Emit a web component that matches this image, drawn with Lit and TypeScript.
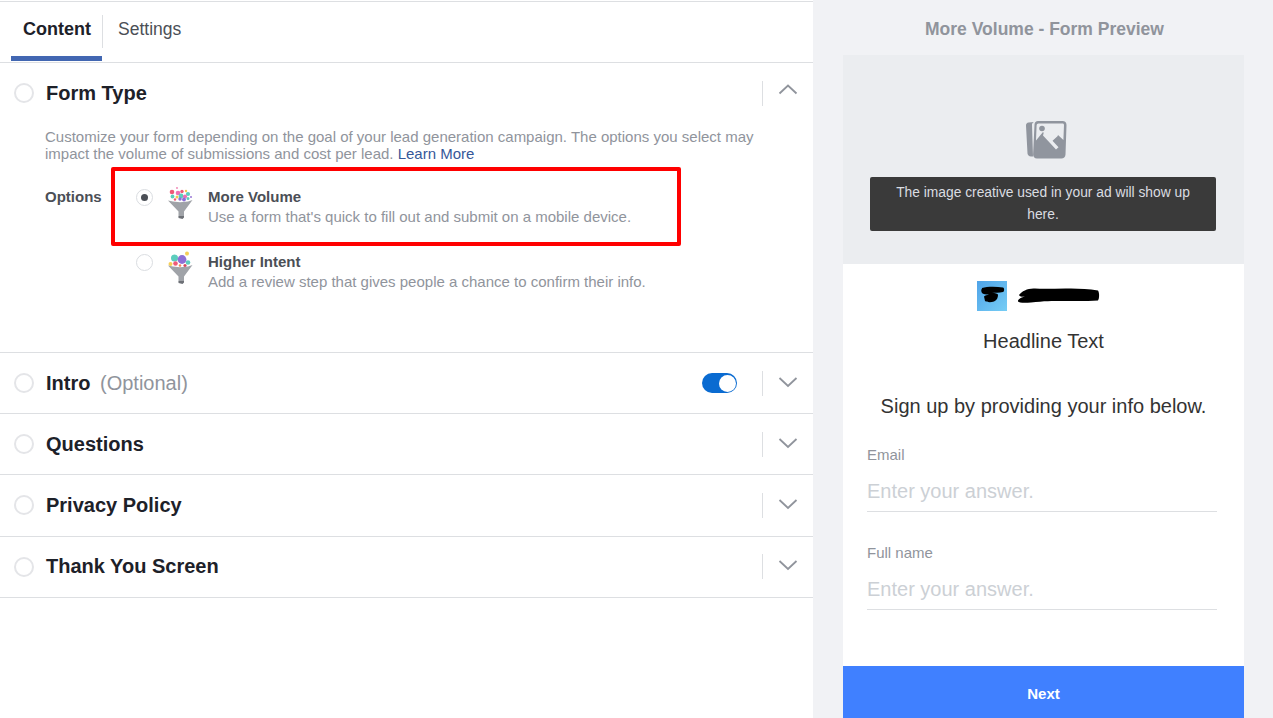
import { LitElement, html, css, svg } from 'lit';
import { customElement } from 'lit/decorators.js';

const chevronUp = html`<svg class="chev up" width="20" height="12" viewBox="0 0 20 12"><path d="M1.500 10.500 10 2.500l8.500 8" fill="none" stroke="#90949c" stroke-width="1.800"/></svg>`;
const chevronDown = html`<svg class="chev" width="20" height="12" viewBox="0 0 20 12"><path d="M1.500 2 10 10l8.500-8" fill="none" stroke="#90949c" stroke-width="1.800"/></svg>`;

// [cx, cy, r, fill] dots spilling out of the funnel
const manyDots: [number, number, number, string][] = [
  [5, 6, 2.300, '#ef5a78'], [10, 2, 0.900, '#ef7fb0'], [11, 7, 2.300, '#ee6fb5'], [15, 5.500, 1.700, '#ef5a78'],
  [19, 5, 1.200, '#f4c84e'], [21, 8, 2.100, '#5ccdbd'], [5.500, 10.500, 1.900, '#5ccdbd'], [10, 11, 1.500, '#f4c84e'],
  [14, 10, 2.400, '#5ccdbd'], [18, 10.500, 2.100, '#ee6fb5'], [24, 11, 1, '#9a78d6'], [13, 13, 1.700, '#8a6fd6'],
  [17, 13.500, 1.900, '#8a6fd6'], [21, 12.500, 1.500, '#5ccdbd'], [8, 13.500, 1.200, '#ef5a78'],
];
const fewDots: [number, number, number, string][] = [
  [7.500, 7, 3.500, '#5ccdbd'], [20, 2.500, 2, '#f6cf57'], [15, 8.500, 4.400, '#8e6fd6'], [3.500, 13, 2, '#f6cf57'],
  [8.500, 12.500, 2.300, '#ef5a78'], [21, 11.500, 2.300, '#5ccdbd'], [13, 14.500, 1.300, '#ef8a5a'], [18, 14.500, 1.600, '#d8455f'],
];

const funnel = (dots: [number, number, number, string][]) => html`<svg width="27" height="35" viewBox="0 0 27 35">
  ${dots.map(([cx, cy, r, fill]) => svg`<circle cx=${cx} cy=${cy} r=${r} fill=${fill}/>`)}
  <path d="M1 14.500 6 15.500l7 .8 8-.8 4.500-1.500-8.500 11.500V30.500H11.500v-5z" fill="#a0a3a8"/>
  <path d="M11.500 30h5.500v1.500l-1.500 1.500-4-1z" fill="#6d7076"/>
</svg>`;

@customElement('app-root')
export class AppRoot extends LitElement {
  static styles = css`
    :host {
      display: block;
      font-family: 'Liberation Sans', Arial, sans-serif;
      color: #1d2129;
    }

    .page {
      display: grid;
      grid-template-columns: 813px 1fr;
      height: 718px;
      overflow: hidden;
      background: #fff;
    }

    .main {
      position: relative;
      border-top: 1px solid #dddfe2;
      margin-top: 1px;
    }

    .tabs {
      display: flex;
      height: 60px;
      padding-left: 11px;
      border-bottom: 1px solid #dddfe2;
    }

    .tab {
      display: flex;
      align-items: center;
      height: 54px;
      font-size: 17.500px;
    }

    .tab.active {
      position: relative;
      width: 91px;
      height: 59px;
      padding-left: 12px;
      box-sizing: border-box;
      font-size: 18px;
      font-weight: bold;
      border-bottom: 5px solid #4267b2;
    }

    .tab.active::after {
      content: '';
      position: absolute;
      right: -1px;
      top: 13px;
      height: 33px;
      width: 1px;
      background: #dddfe2;
    }

    .tab.plain {
      padding-left: 16px;
      color: #4b4f56;
    }

    .section {
      border-bottom: 1px solid #dddfe2;
    }

    .head {
      display: flex;
      align-items: center;
      height: 60px;
      padding: 0 15px 0 13.500px;
    }

    .row .head {
      height: 60.200px;
    }

    .radio {
      width: 20px;
      height: 20px;
      border: 2px solid #e4e5e8;
      border-radius: 50%;
      box-sizing: border-box;
      margin-right: 12.500px;
      flex: none;
    }

    .title {
      font-size: 20px;
      font-weight: bold;
      flex: 1;
    }

    .title span {
      font-weight: normal;
      color: #90949c;
      margin-left: 4px;
    }

    .sep {
      width: 1px;
      height: 25px;
      background: #dddfe2;
      margin: 0 15px 0 25px;
    }

    .chev {
      display: block;
      margin-top: -3px;
    }

    .chev.up {
      margin-top: -9px;
    }

    .toggle {
      position: relative;
      width: 35px;
      height: 20px;
      border-radius: 10px;
      background: #0a6bd1;
    }

    .toggle::after {
      content: '';
      position: absolute;
      right: 1px;
      top: 1.500px;
      width: 17px;
      height: 17px;
      border-radius: 50%;
      background: #fff;
    }

    .body {
      height: 229px;
      padding: 5px 40px 0 45px;
      box-sizing: border-box;
    }

    .intro {
      margin: 0;
      font-size: 15px;
      line-height: 17px;
      color: #90949c;
    }

    .intro a {
      color: #365899;
      text-decoration: none;
    }

    .options {
      display: grid;
      grid-template-columns: 91px 1fr;
      margin-top: 25px;
    }

    .opt-label {
      font-size: 15px;
      font-weight: bold;
      color: #4b4f56;
      padding-top: 1px;
    }

    .opt {
      display: flex;
      height: 65px;
    }

    .dot {
      width: 17px;
      height: 17px;
      margin-top: 2px;
      border: 1px solid #dadde1;
      border-radius: 50%;
      box-sizing: border-box;
      display: flex;
      align-items: center;
      justify-content: center;
      flex: none;
    }

    .dot.on::after {
      content: '';
      width: 7px;
      height: 7px;
      border-radius: 50%;
      background: #4b4f56;
    }

    .fn {
      margin: -1px 14px 0 14px;
      flex: none;
    }

    .opt h4 {
      margin: 1px 0 0;
      font-size: 15px;
      line-height: 18px;
      color: #4b4f56;
    }

    .opt p {
      margin: 2px 0 0;
      font-size: 15px;
      line-height: 18px;
      color: #90949c;
    }

    .highlight {
      position: absolute;
      left: 111px;
      top: 165px;
      width: 570px;
      height: 79px;
      box-sizing: border-box;
      border: 4px solid #f00;
      border-radius: 2px;
    }

    .side {
      background: #f1f2f5;
      padding: 0 29px 0 30px;
      display: flex;
      flex-direction: column;
    }

    .side h3 {
      margin: 0;
      height: 55px;
      line-height: 59px;
      padding-left: 2px;
      text-align: center;
      font-size: 17.500px;
      color: #90949c;
    }

    .card {
      flex: 1;
      background: #fff;
      display: flex;
      flex-direction: column;
    }

    .media {
      height: 209px;
      background: #ebedf0;
      padding-top: 65px;
      box-sizing: border-box;
      display: flex;
      flex-direction: column;
      align-items: center;
    }

    .media svg {
      display: block;
      margin-left: 5px;
    }

    .notice {
      width: 346px;
      height: 54px;
      margin: 18px 1px 0 0;
      padding: 5px 20px;
      box-sizing: border-box;
      background: #3a3a3a;
      border-radius: 2px;
      color: #dadde1;
      font-size: 13.800px;
      line-height: 22px;
      text-align: center;
    }

    .brand {
      display: flex;
      align-items: center;
      height: 30px;
      margin: 17px 0 0 134px;
    }

    .logo {
      width: 30px;
      height: 30px;
      background: linear-gradient(135deg, #4fa3e8, #76cdf5);
    }

    .brand svg {
      display: block;
    }

    .redacted {
      margin-left: 10px;
    }

    .headline {
      margin-top: 16px;
      font-size: 20px;
      line-height: 28px;
      text-align: center;
      color: #333;
    }

    .signup {
      margin-top: 37px;
      font-size: 20px;
      line-height: 28px;
      text-align: center;
      color: #333;
    }

    .fields {
      flex: 1;
      padding: 26px 27px 0 24px;
    }

    .field {
      height: 98px;
    }

    .field label {
      display: block;
      font-size: 15px;
      line-height: 18px;
      color: #90949c;
    }

    .answer {
      height: 39px;
      line-height: 38px;
      margin-top: 8px;
      font-size: 20px;
      color: #ccd0d5;
      border-bottom: 1px solid #dddfe2;
    }

    .next {
      height: 52px;
      line-height: 56px;
      text-align: center;
      background: #4080ff;
      color: #fff;
      font-size: 15px;
      font-weight: bold;
    }
  `;

  private row(name: string, extra = '', toggle = false) {
    return html`<div class="section row">
      <div class="head">
        <div class="radio"></div>
        <div class="title">${name}${extra ? html` <span>${extra}</span>` : ''}</div>
        ${toggle ? html`<div class="toggle"></div>` : ''}
        <div class="sep"></div>
        ${chevronDown}
      </div>
    </div>`;
  }

  render() {
    return html`<div class="page">
      <div class="main">
        <div class="tabs">
          <div class="tab active">Content</div>
          <div class="tab plain">Settings</div>
        </div>
        <div class="section">
          <div class="head">
            <div class="radio"></div>
            <div class="title">Form Type</div>
            <div class="sep"></div>
            ${chevronUp}
          </div>
          <div class="body">
            <p class="intro">Customize your form depending on the goal of your lead generation campaign. The options you select may impact the volume of submissions and cost per lead. <a>Learn More</a></p>
            <div class="options">
              <div class="opt-label">Options</div>
              <div>
                <div class="opt">
                  <div class="dot on"></div>
                  <div class="fn">${funnel(manyDots)}</div>
                  <div>
                    <h4>More Volume</h4>
                    <p>Use a form that's quick to fill out and submit on a mobile device.</p>
                  </div>
                </div>
                <div class="opt">
                  <div class="dot"></div>
                  <div class="fn">${funnel(fewDots)}</div>
                  <div>
                    <h4>Higher Intent</h4>
                    <p>Add a review step that gives people a chance to confirm their info.</p>
                  </div>
                </div>
              </div>
            </div>
          </div>
        </div>
        ${this.row('Intro', '(Optional)', true)}
        ${this.row('Questions')}
        ${this.row('Privacy Policy')}
        ${this.row('Thank You Screen')}
        <div class="highlight"></div>
      </div>
      <div class="side">
        <h3>More Volume - Form Preview</h3>
        <div class="card">
          <div class="media">
            <svg width="41" height="39" viewBox="0 0 41 39">
              <path d="M8 2 2.500 2.500C1 2.700 0 3.800 0 5.500l1.500 28c.1 1.500 1.500 3 3.500 3h2L6 5c-.1-1.300.7-2.300 2-3z" fill="#90959e"/>
              <path d="M12 1h24.500c2.500 0 4 1.500 4 4l-1 29.500c-.1 2.500-1.800 4-4.100 4H11c-2.500 0-4-1.700-3.900-4L8.500 4.500C8.600 2.300 9.900 1 12 1z" fill="#90959e"/>
              <path d="M12.500 3.500h24c1 0 1.500.6 1.500 1.600l-.6 15-5.400-5.100-6.500 6-8.500-9L10 20.500l.6-15c0-1.200.8-2 1.900-2z" fill="#ebedf0"/>
              <circle cx="16" cy="8.500" r="2.800" fill="#90959e"/>
              <path d="M17 15.500l7 7.500 6 6.500 2.500-2.300-6-6.500 5.500-5-1.500-1.500-5.500 5-7-7.500z" fill="#ebedf0"/>
            </svg>
            <div class="notice">The image creative used in your ad will show up here.</div>
          </div>
          <div class="brand">
            <div class="logo">
              <svg width="30" height="30" viewBox="0 0 30 30"><path d="M5 7c5-1.500 14-1.500 21-.5 1.500.5 1.500 4 0 4.500-4 .8-8 .8-11 1 3 0 6 .5 6 2 0 2.500-1 5-4 6.500-3 1-7 1-9-.5l-1-4.500c1-1 3-1.500 5-2-3 0-6-.5-7-1.500-1-1.500-1-3.500 0-4.500z" fill="#000"/></svg>
            </div>
            <svg class="redacted" width="84" height="20" viewBox="0 0 84 20">
              <path d="M2 9c3-4 9-7 16-6.500 12 1 24-.5 36 0 9 .3 18 .5 27 2 1.500 2 1.500 8 0 10-11 .8-25 .5-37 .5-8 0-17 0-30 1.500-6 .5-12 .5-13-1-.5-2 3-4 8-5.500C5 11 3 11 2 9z" fill="#000"/>
            </svg>
          </div>
          <div class="headline">Headline Text</div>
          <div class="signup">Sign up by providing your info below.</div>
          <div class="fields">
            <div class="field">
              <label>Email</label>
              <div class="answer">Enter your answer.</div>
            </div>
            <div class="field">
              <label>Full name</label>
              <div class="answer">Enter your answer.</div>
            </div>
          </div>
          <div class="next">Next</div>
        </div>
      </div>
    </div>`;
  }
}
